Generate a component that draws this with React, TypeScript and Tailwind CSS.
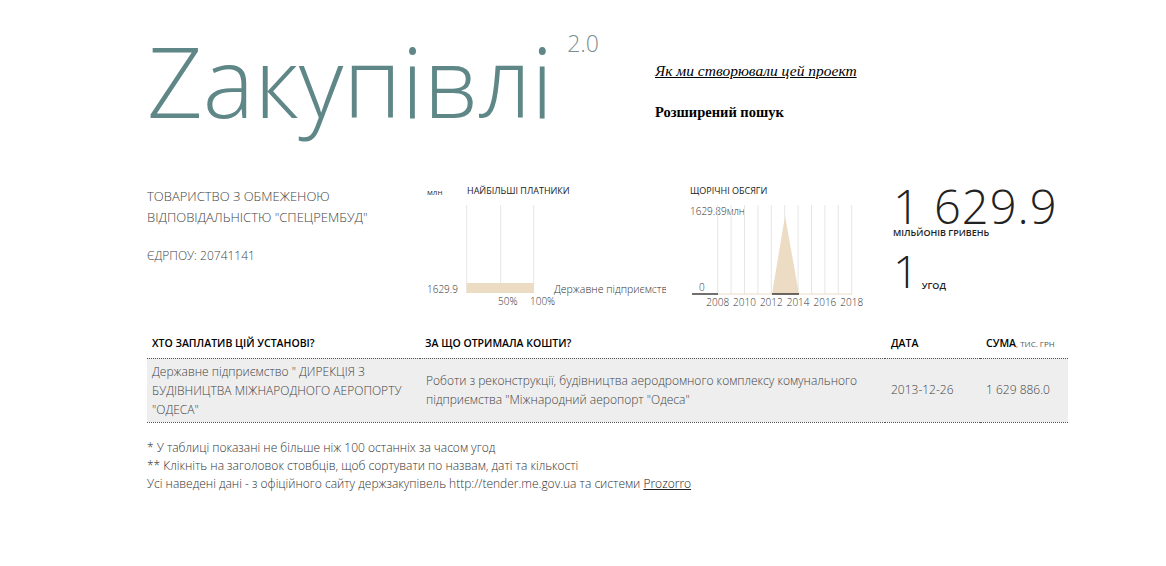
import React from 'react';

const years = [2008, 2010, 2012, 2014, 2016, 2018];

const TopPayers: React.FC = () => (
  <svg width="250" height="130" className="block" style={{ fontFamily: '"Open Sans", sans-serif' }}>
    {/* origin x=420, y=180 */}
    <text x="7" y="15" fontSize="8" fill="#333">млн</text>
    <text x="47" y="14" fontSize="9" fill="#222">НАЙБІЛЬШІ ПЛАТНИКИ</text>
    {[46.7, 80.7, 113.7].map(x => (
      <line key={x} x1={x} x2={x} y1="25" y2="113" stroke="#e6e6e6" strokeWidth="1" />
    ))}
    <rect x="46.7" y="103" width="67" height="10" fill="#ecdcc4" />
    <text x="7" y="113" fontSize="10" fontWeight="300" fill="#333">1629.9</text>
    <text x="134" y="113" fontSize="10.5" fontWeight="300" fill="#333">Державне підприємство</text>
    <text x="78" y="125" fontSize="10" fontWeight="300" fill="#333">50%</text>
    <text x="110" y="125" fontSize="10" fontWeight="300" fill="#333">100%</text>
  </svg>
);

const YearlyChart: React.FC = () => {
  const xs = Array.from({ length: 11 }, (_, i) => 37.7 + i * 13.4);
  return (
    <svg width="200" height="130" className="block" style={{ fontFamily: '"Open Sans", sans-serif' }}>
      {/* origin x=680, y=180 */}
      <text x="10" y="14" fontSize="9" fill="#222">ЩОРІЧНІ ОБСЯГИ</text>
      <text x="10" y="35" fontSize="10" fontWeight="300" fill="#333">1629.89млн</text>
      {xs.map(x => (
        <line key={x} x1={x} x2={x} y1="25" y2="114" stroke="#e6e6e6" strokeWidth="1" />
      ))}
      <polygon points="92,114 105,36 119,114" fill="#ecdcc4" />
      <line x1="37.7" x2="172" y1="114" y2="114" stroke="#ecdcc4" strokeWidth="1" />
      <line x1="12" x2="38" y1="114" y2="114" stroke="#111" strokeWidth="1.2" />
      <line x1="92" x2="119" y1="114" y2="114" stroke="#111" strokeWidth="1.2" />
      <text x="19" y="111" fontSize="10" fontWeight="300" fill="#333">0</text>
      {years.map((y, i) => (
        <text key={y} x={37.7 + i * 26.8} y="126" fontSize="10" fontWeight="300" fill="#333" textAnchor="middle">{y}</text>
      ))}
    </svg>
  );
};

const App: React.FC = () => {
  return (
    <div className="w-[1166px] h-[566px] bg-white overflow-hidden text-[#333]" style={{ fontFamily: '"Open Sans", sans-serif' }}>
      <div className="pl-[147px] pt-[18px]">
        {/* Header */}
        <div className="flex items-start">
          <div className="flex items-start w-[508px]">
            <h1 className="text-[97px] leading-[124px] font-light text-[#5f8787]">Zакупівлі</h1>
            <span className="ml-[14px] mt-[8px] text-[23px] font-light text-[#7a8f8f]">2.0</span>
          </div>
          <div className="pt-[41px]" style={{ fontFamily: '"Liberation Serif", serif' }}>
            <a className="block italic underline text-[15.5px] text-black">Як ми створювали цей проект</a>
            <div className="mt-[20px] text-[14.5px] font-bold text-black">Розширений пошук</div>
          </div>
        </div>

        {/* Summary */}
        <div className="flex mt-[42px] h-[136px]">
          <div className="w-[273px] pt-[2px]">
            <div className="text-[13px] leading-[21px] text-[#444] uppercase font-light">
              Товариство з обмеженою відповідальністю "СПЕЦРЕМБУД"
            </div>
            <div className="mt-[19px] text-[12px] text-[#444] font-light">ЄДРПОУ: 20741141</div>
          </div>
          <div className="w-[260px] overflow-hidden -mt-[4px]">
            <div className="w-[246px] overflow-hidden">
              <TopPayers />
            </div>
          </div>
          <div className="w-[213px] -mt-[4px]">
            <YearlyChart />
          </div>
          <div className="mt-[1px] text-[#222]">
            <div className="text-[47px] leading-[42px] font-light tracking-[1px]">1 629.9</div>
            <div className="text-[9px] leading-[11px] font-semibold uppercase">мільйонів гривень</div>
            <div className="flex items-end mt-[13px]">
              <span className="text-[45px] leading-[40px] font-light">1</span>
              <span className="ml-[3px] text-[9px] leading-[11px] font-semibold uppercase">угод</span>
            </div>
          </div>
        </div>

        {/* Table */}
        <table className="w-[921px] mt-[10px] border-collapse text-[12px]">
          <thead>
            <tr className="border-b border-dotted border-[#555]">
              <th className="w-[273px] text-left font-semibold text-[10.5px] text-black px-[5px] pb-[6px] pt-[6px]">ХТО ЗАПЛАТИВ ЦІЙ УСТАНОВІ?</th>
              <th className="w-[465px] text-left font-semibold text-[10.5px] text-black px-[5px] pb-[6px] pt-[6px]">ЗА ЩО ОТРИМАЛА КОШТИ?</th>
              <th className="w-[95px] text-left font-semibold text-[10.5px] text-black px-[6px] pb-[6px] pt-[6px]">ДАТА</th>
              <th className="text-left font-semibold text-[10.5px] text-black px-[6px] pb-[6px] pt-[6px]">
                СУМА<span className="font-normal text-[8px] text-[#555]">, ТИС. ГРН</span>
              </th>
            </tr>
          </thead>
          <tbody>
            <tr className="bg-[#eeeeee] border-b border-dotted border-[#555] text-[#444] font-light">
              <td className="px-[5px] py-[3px] leading-[19px] align-middle">
                Державне підприємство " ДИРЕКЦІЯ З БУДІВНИЦТВА МІЖНАРОДНОГО АЕРОПОРТУ "ОДЕСА"
              </td>
              <td className="px-[6px] py-[3px] leading-[19px] align-middle">
                Роботи з реконструкції, будівництва аеродромного комплексу комунального підприємства "Міжнародний аеропорт "Одеса"
              </td>
              <td className="px-[6px] py-[3px] align-middle">2013-12-26</td>
              <td className="px-[6px] py-[3px] align-middle">1 629 886.0</td>
            </tr>
          </tbody>
        </table>

        {/* Notes */}
        <div className="mt-[16px] text-[12px] leading-[18px] text-[#333] font-light">
          <div>* У таблиці показані не більше ніж 100 останніх за часом угод</div>
          <div>** Клікніть на заголовок стовбців, щоб сортувати по назвам, даті та кількості</div>
          <div>
            Усі наведені дані - з офіційного сайту держзакупівель http://tender.me.gov.ua та системи{' '}
            <a className="underline text-[#222]">Prozorro</a>
          </div>
        </div>
      </div>
    </div>
  );
};

export default App;
